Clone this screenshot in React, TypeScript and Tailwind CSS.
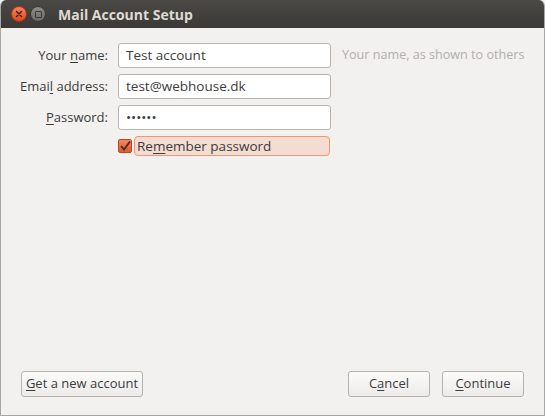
import React from 'react';

// Mail Account Setup — Ubuntu/Unity style dialog

const FONT = { fontFamily: '"Open Sans", "DejaVu Sans", sans-serif' };

function U({ children }: { children: React.ReactNode }) {
  return <span className="underline underline-offset-2 decoration-1">{children}</span>;
}

function Field({ label, value, hint }: { label: React.ReactNode; value: string; hint?: string }) {
  return (
    <div className="flex items-center h-[25px]">
      <div className="w-[108px] pr-[1px] text-right text-[13px] text-[#3c3c3c]">{label}</div>
      <div className="ml-[9px] w-[213px] h-[25px] rounded-[3px] border border-[#b8b5b0] bg-white flex items-center px-[7px] text-[13.5px] text-[#3c3c3c]">
        {value}
      </div>
      {hint && <div className="ml-[11px] text-[12.6px] text-[#b3afa9] whitespace-nowrap">{hint}</div>}
    </div>
  );
}

function Btn({ children, className }: { children: React.ReactNode; className?: string }) {
  return (
    <div
      className={
        'h-[26px] rounded-[3px] border border-[#b6b3ae] bg-gradient-to-b from-[#fbfbfa] to-[#ecebea] flex items-center justify-center text-[13px] text-[#3c3c3c] ' +
        (className || '')
      }
    >
      {children}
    </div>
  );
}

export default function App() {
  return (
    <div className="w-[545px] h-[416px] bg-[#f2f1f0]" style={FONT}>
      <div className="w-full h-full flex flex-col rounded-t-[6px] border-x border-b border-[#a9a7a4] overflow-hidden">
        {/* title bar */}
        <div className="h-[28px] shrink-0 bg-gradient-to-b from-[#4a4945] to-[#3a3935] flex items-center pl-[10px]">
          <div className="w-[16px] h-[16px] rounded-full bg-gradient-to-b from-[#f7825a] to-[#e0461c] border border-[#a63a18] flex items-center justify-center">
            <svg width="8" height="8" viewBox="0 0 8 8">
              <path d="M1.5 1.5 L6.5 6.5 M6.5 1.5 L1.5 6.5" stroke="#3b1a0d" strokeWidth="1.4" strokeLinecap="round" />
            </svg>
          </div>
          <div className="ml-[3px] w-[16px] h-[16px] rounded-full bg-gradient-to-b from-[#8e8c88] to-[#6c6a66] border border-[#3a3935] flex items-center justify-center">
            <div className="w-[7px] h-[7px] border border-[#3a3935] rounded-[1px]" />
          </div>
          <div className="ml-[12px] text-[14px] font-bold text-[#dfdbd2]">Mail Account Setup</div>
        </div>

        {/* form */}
        <div className="flex-1 flex flex-col pt-[15px] gap-[6px]">
          <Field label={<>Your <U>n</U>ame:</>} value="Test account" hint="Your name, as shown to others" />
          <Field label={<>Emai<U>l</U> address:</>} value="test@webhouse.dk" />
          <Field label={<><U>P</U>assword:</>} value="••••••" />
          <div className="flex items-center h-[20px] ml-[117px]">
            <div className="w-[14px] h-[14px] rounded-[2px] bg-gradient-to-b from-[#f0855e] to-[#dd5a2e] border border-[#b9461f] flex items-center justify-center">
              <svg width="12" height="12" viewBox="0 0 12 12">
                <path d="M2 6 L5 9.5 L11 1.5" stroke="#4a2a1c" strokeWidth="1.8" fill="none" />
              </svg>
            </div>
            <div className="ml-[2px] w-[196px] h-[20px] rounded-[4px] border border-[#f09670] bg-[#f4dcd2] flex items-center pl-[2px] text-[13.5px] text-[#3c3c3c]">
              Re<U>m</U>ember password
            </div>
          </div>
        </div>

        {/* buttons */}
        <div className="h-[26px] mb-[18px] flex items-center px-[20px]">
          <Btn className="w-[122px]"><U>G</U>et a new account</Btn>
          <div className="flex-1" />
          <Btn className="w-[82px]">C<U>a</U>ncel</Btn>
          <Btn className="w-[82px] ml-[12px]"><U>C</U>ontinue</Btn>
        </div>
      </div>
    </div>
  );
}
